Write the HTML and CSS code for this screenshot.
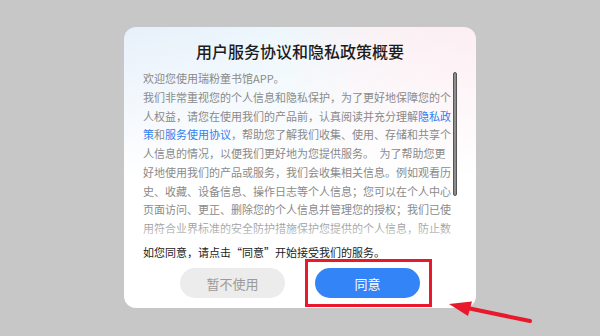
FILE: index.html
```html
<!DOCTYPE html>
<html lang="zh-CN">
<head>
<meta charset="utf-8">
<title>用户服务协议和隐私政策概要</title>
<link rel="stylesheet" href="styles.css">
</head>
<body>
<div class="stage">
  <div class="card">
    <h1 class="title">用户服务协议和隐私政策概要</h1>
    <div class="scroll">
      <div class="text">
        <p>欢迎您使用瑞粉童书馆APP。</p>
        <p>我们非常重视您的个人信息和隐私保护，为了更好地保障您的个人权益，请您在使用我们的产品前，认真阅读并充分理解<a class="link">隐私政策</a>和<a class="link">服务使用协议</a>，帮助您了解我们收集、使用、存储和共享个人信息的情况，以便我们更好地为您提供服务。　为了帮助您更好地使用我们的产品或服务，我们会收集相关信息。例如观看历史、收藏、设备信息、操作日志等个人信息；您可以在个人中心页面访问、更正、删除您的个人信息并管理您的授权；我们已使用符合业界标准的安全防护措施保护您提供的个人信息，防止数据遭到未经授权的访问、公开披露、使用、修改、损坏或丢失。</p>
      </div>
      <div class="thumb"></div>
    </div>
    <p class="agree-note">如您同意，请点击“同意”开始接受我们的服务。</p>
    <div class="actions">
      <button class="btn btn-decline">暂不使用</button>
      <button class="btn btn-agree">同意</button>
    </div>
  </div>
  <div class="highlight"></div>
  <svg class="arrow" width="600" height="336" viewBox="0 0 600 336">
    <line x1="530" y1="321" x2="465" y2="307.5" stroke="#e8192c" stroke-width="4" stroke-linecap="round"/>
    <polygon points="449,304 472,301.5 468,316" fill="#e8192c"/>
  </svg>
</div>
</body>
</html>
```
FILE: styles.css
```css
html, body {
  margin: 0;
  padding: 0;
}
body {
  background: #c7c7c7;
  font-family: "Noto Sans CJK SC", "Noto Sans", sans-serif;
}
.stage {
  position: relative;
  width: 600px;
  height: 336px;
  padding-top: 27px;
  box-sizing: border-box;
  overflow: hidden;
}
.card {
  width: 352px;
  height: 281px;
  margin: 0 auto;
  box-sizing: border-box;
  padding: 12px 19px 10px;
  border-radius: 12px;
  background:
    linear-gradient(180deg, rgba(255,255,255,0) 0, #ffffff 150px),
    linear-gradient(90deg, #e7f0fb 0%, #edf7fc 45%, #fbf1f5 75%, #fdeef2 100%);
}
.title {
  margin: 0 0 6px;
  height: 24px;
  line-height: 24px;
  font-size: 16px;
  font-weight: 500;
  color: #1c1c1c;
  text-align: center;
}
.scroll {
  position: relative;
  height: 169px;
  overflow: hidden;
}
.scroll::after {
  content: "";
  position: absolute;
  left: 0;
  right: 0;
  bottom: 0;
  height: 20px;
  background: linear-gradient(180deg, rgba(255,255,255,0), rgba(255,255,255,0.6));
}
.text {
  width: 310px;
  font-size: 11px;
  line-height: 18.75px;
  color: #8a8a8a;
}
.text p {
  margin: 0;
}
.link {
  color: #2f7ff0;
}
.thumb {
  position: absolute;
  left: 310px;
  top: 3px;
  width: 4px;
  height: 124px;
  box-sizing: border-box;
  border: 1px solid #555;
  border-radius: 2px;
  background: #8d8d8d;
}
.agree-note {
  margin: 5px 0 0;
  height: 18px;
  line-height: 18px;
  font-size: 11px;
  color: #222;
}
.actions {
  display: flex;
  justify-content: center;
  gap: 30px;
  margin-top: 7px;
}
.btn {
  width: 105px;
  height: 30px;
  border: none;
  border-radius: 15px;
  font-family: "Noto Sans CJK SC", "Noto Sans", sans-serif;
  font-size: 13px;
  padding: 0;
}
.btn-decline {
  background: #ececec;
  color: #9a9a9a;
}
.btn-agree {
  background: #3384f6;
  color: #ffffff;
}
.highlight {
  position: absolute;
  left: 305px;
  top: 259px;
  width: 127px;
  height: 48px;
  box-sizing: border-box;
  border: 3px solid #e8192c;
}
.arrow {
  position: absolute;
  left: 0;
  top: 0;
}
```
